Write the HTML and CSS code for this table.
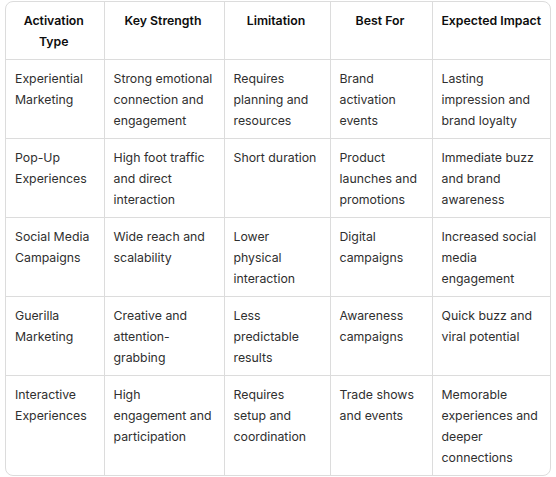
FILE: index.html
```html
<!DOCTYPE html>
<html>
<head>
<meta charset="utf-8">
<link rel="stylesheet" href="styles.css">
</head>
<body>
<div class="page">
  <div class="table-wrap">
    <table class="grid">
      <colgroup>
        <col class="c1"><col class="c2"><col class="c3"><col class="c4"><col class="c5">
      </colgroup>
      <thead>
        <tr>
          <th>Activation Type</th>
          <th>Key Strength</th>
          <th>Limitation</th>
          <th>Best For</th>
          <th class="one-line">Expected Impact</th>
        </tr>
      </thead>
      <tbody>
        <tr>
          <td>Experiential Marketing</td>
          <td>Strong emotional connection and engagement</td>
          <td>Requires planning and resources</td>
          <td>Brand activation events</td>
          <td>Lasting impression and brand loyalty</td>
        </tr>
        <tr>
          <td>Pop-Up Experiences</td>
          <td>High foot traffic and direct interaction</td>
          <td>Short duration</td>
          <td>Product launches and promotions</td>
          <td>Immediate buzz and brand awareness</td>
        </tr>
        <tr>
          <td>Social Media Campaigns</td>
          <td>Wide reach and scalability</td>
          <td>Lower physical interaction</td>
          <td>Digital campaigns</td>
          <td>Increased social media engagement</td>
        </tr>
        <tr>
          <td>Guerilla Marketing</td>
          <td>Creative and attention-grabbing</td>
          <td>Less predictable results</td>
          <td>Awareness campaigns</td>
          <td>Quick buzz and viral potential</td>
        </tr>
        <tr>
          <td>Interactive Experiences</td>
          <td>High engagement and participation</td>
          <td>Requires setup and coordination</td>
          <td>Trade shows and events</td>
          <td>Memorable experiences and deeper connections</td>
        </tr>
      </tbody>
    </table>
  </div>
</div>
</body>
</html>
```
FILE: styles.css
```css
html, body {
  margin: 0;
  padding: 0;
  background: #ffffff;
}
.page {
  padding: 1px 5px 0 5px;
  font-family: Inter, "Liberation Sans", sans-serif;
  font-size: 12.3px;
  line-height: 21px;
  color: #2f2f2f;
}
.table-wrap {
  width: 546px;
  border: 1px solid #dcdcdc;
  border-radius: 8px;
  overflow: hidden;
  box-sizing: border-box;
}
.grid {
  width: 100%;
  border-collapse: collapse;
  table-layout: fixed;
}
.c1 { width: 98px; }
.c2 { width: 120px; }
.c3 { width: 106px; }
.c4 { width: 102px; }
.c5 { width: auto; }
.grid th,
.grid td {
  border-right: 1px solid #dcdcdc;
  border-bottom: 1px solid #dcdcdc;
  padding: 8px 11px 7px 9px;
  vertical-align: top;
  text-align: left;
}
.grid th:last-child,
.grid td:last-child {
  border-right: none;
}
.grid tbody tr:last-child td {
  border-bottom: none;
}
.grid th {
  font-weight: 600;
  color: #0d0d0d;
  text-align: center;
}
.grid th.one-line {
  white-space: nowrap;
  padding-left: 3px;
  padding-right: 3px;
}
```
